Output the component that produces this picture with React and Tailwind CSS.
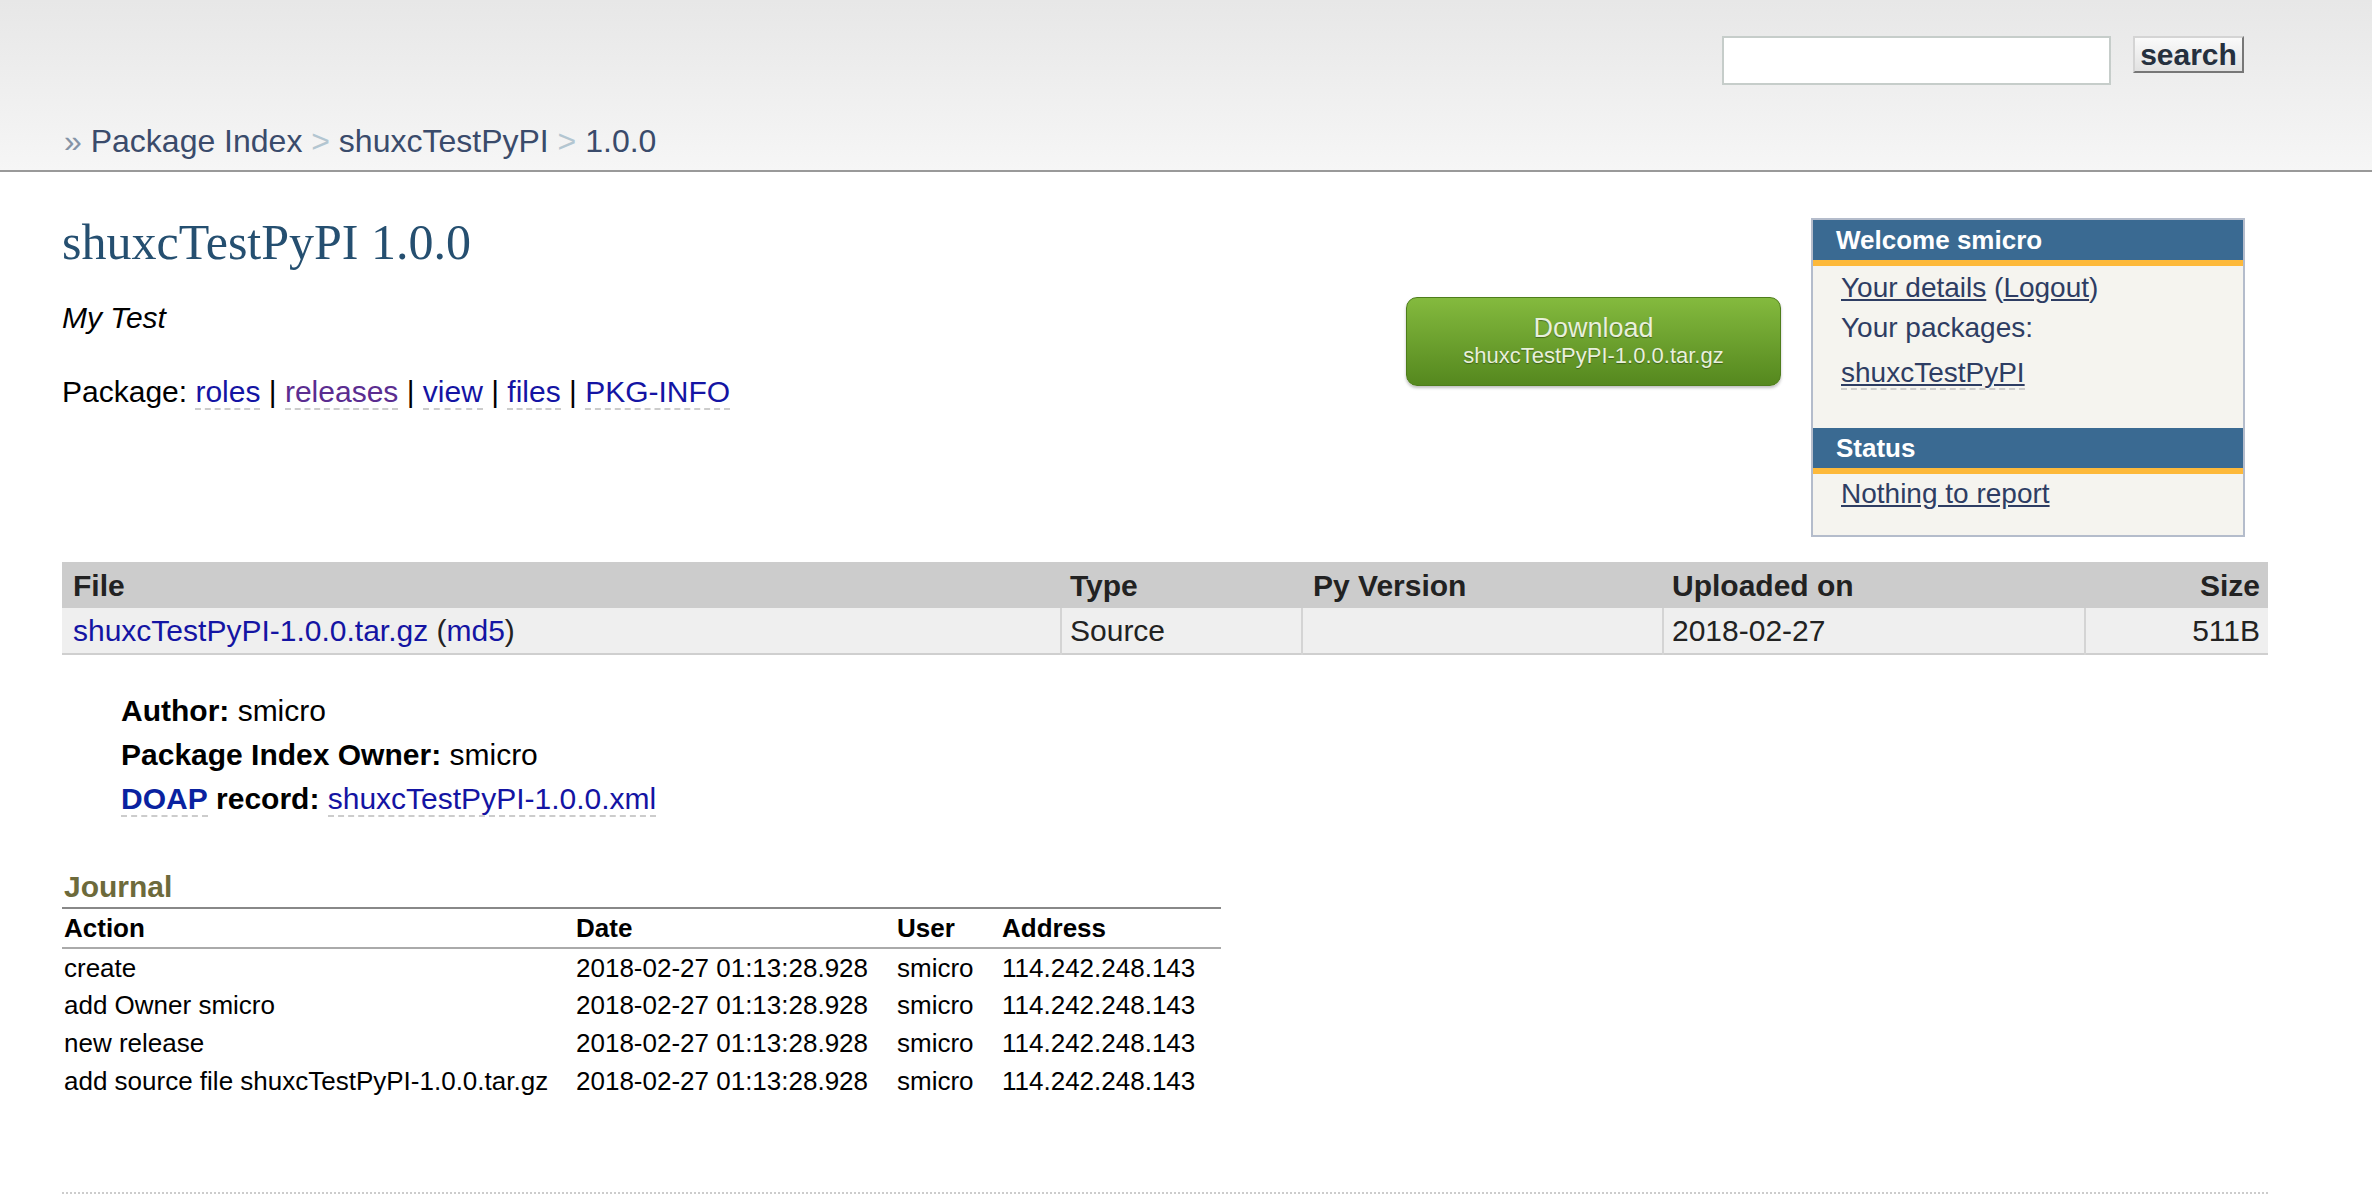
import React from "react";

const journal = [
  ["create"],
  ["add Owner smicro"],
  ["new release"],
  ["add source file shuxcTestPyPI-1.0.0.tar.gz"],
];

function Header() {
  return (
    <header className="h-[172px] border-b-2 border-[#999] bg-gradient-to-b from-[#e7e7e7] to-[#f6f6f6]">
      {/* search */}
      <div className="flex justify-end pt-[36px] pr-[128px]">
        <input
          type="text"
          className="w-[389px] h-[49px] bg-white border-2 border-[#c6cdca] outline-none"
        />
        <button className="ml-[22px] w-[111px] h-[37px] border-2 border-t-[#d4d4d4] border-l-[#d4d4d4] border-r-[#777] border-b-[#777] bg-gradient-to-b from-[#fafafa] to-[#e2e2e2] text-[30px] leading-[30px] font-bold text-[#25303e]">
          search
        </button>
      </div>

      {/* breadcrumb */}
      <nav className="mt-[38px] pl-[64px] text-[32px] leading-[36px] text-[#3a4b6b]">
        <span className="text-[#8593a6]">»</span> Package Index{" "}
        <span className="text-[#b3c6d1]">&gt;</span> shuxcTestPyPI{" "}
        <span className="text-[#b3c6d1]">&gt;</span> 1.0.0
      </nav>
    </header>
  );
}

function PkgLink({ children, visited }) {
  return (
    <a
      href="#"
      className={
        "border-b-2 border-dashed border-[#cccccc] " +
        (visited ? "text-[#5b2d90]" : "text-[#1414a3]")
      }
    >
      {children}
    </a>
  );
}

function DownloadButton() {
  return (
    <a
      href="#"
      className="mt-[83px] flex flex-col items-center w-[375px] h-[89px] pt-[15px] rounded-[11px] border border-[#4e7d1b] bg-gradient-to-b from-[#84ba3e] to-[#55881e] shadow-[0_2px_3px_rgba(0,0,0,0.25)] text-[#e8f0dc] [text-shadow:0_1px_1px_rgba(0,0,0,0.35)]"
    >
      <span className="text-[27px] leading-[30px]">Download</span>
      <span className="text-[22px] leading-[26px]">shuxcTestPyPI-1.0.0.tar.gz</span>
    </a>
  );
}

function Sidebar() {
  return (
    <aside className="mt-[4px] ml-[30px] mr-[23px] w-[434px] h-[319px] border-2 border-[#b4bccb] bg-[#f5f4ef] text-[28px] leading-[40px] text-[#1f1f1f]">
      <div className="h-[40px] bg-[#3a6a92] pl-[23px] text-[26px] font-bold text-white">
        Welcome smicro
      </div>
      <div className="h-[6px] bg-[#fdb93a]" />
      <div className="pl-[28px] pt-[2px]">
        <div>
          <a href="#" className="underline text-[#2e3d63]">Your details</a>{" "}
          <span className="text-[#2e3d63]">
            (<a href="#" className="underline">Logout</a>)
          </span>
        </div>
        <div className="text-[#2e3d63]">Your packages:</div>
        <div className="mt-[5px]">
          <a
            href="#"
            className="underline text-[#2e3d63] border-b-2 border-dashed border-[#cccccc]"
          >
            shuxcTestPyPI
          </a>
        </div>
      </div>
      <div className="mt-[35px] h-[40px] bg-[#3a6a92] pl-[23px] text-[26px] font-bold text-white">
        Status
      </div>
      <div className="h-[6px] bg-[#fdb93a]" />
      <div className="pl-[28px]">
        <a href="#" className="underline text-[#2e3d63]">Nothing to report</a>
      </div>
    </aside>
  );
}

function FilesTable() {
  return (
    <table className="mt-[25px] w-[2206px] border-collapse text-[30px] text-[#222]">
      <thead>
        <tr className="h-[46px] bg-[#cccccc] text-left">
          <th className="w-[999px] pl-[11px] font-bold">File</th>
          <th className="w-[241px] pl-[9px] font-bold">Type</th>
          <th className="w-[361px] pl-[11px] font-bold">Py Version</th>
          <th className="w-[422px] pl-[9px] font-bold">Uploaded on</th>
          <th className="pr-[8px] text-right font-bold">Size</th>
        </tr>
      </thead>
      <tbody>
        <tr className="h-[42px] bg-[#efefef] border-b-2 border-[#cfcfcf]">
          <td className="pl-[11px]">
            <a href="#" className="text-[#1414a3]">shuxcTestPyPI-1.0.0.tar.gz</a> (
            <a href="#" className="text-[#1414a3]">md5</a>)
          </td>
          <td className="pl-[8px] border-l-2 border-[#d4d4d4]">Source</td>
          <td className="pl-[10px] border-l-2 border-[#d4d4d4]"></td>
          <td className="pl-[8px] border-l-2 border-[#d4d4d4]">2018-02-27</td>
          <td className="pr-[8px] text-right border-l-2 border-[#d4d4d4]">511B</td>
        </tr>
      </tbody>
    </table>
  );
}

function Meta() {
  return (
    <div className="mt-[34px] pl-[59px] text-[30px] leading-[44px] text-black">
      <div>
        <b>Author:</b> smicro
      </div>
      <div>
        <b>Package Index Owner:</b> smicro
      </div>
      <div>
        <a href="#" className="font-bold text-[#0a22a0] border-b-2 border-dashed border-[#cccccc]">
          DOAP
        </a>{" "}
        <b>record:</b>{" "}
        <a href="#" className="text-[#1414a3] border-b-2 border-dashed border-[#cccccc]">
          shuxcTestPyPI-1.0.0.xml
        </a>
      </div>
    </div>
  );
}

function Journal() {
  return (
    <section className="mt-[48px] w-[1159px]">
      <h2 className="pl-[2px] text-[30px] leading-[36px] font-bold text-[#6d6a3b] border-b-2 border-[#888] pb-[2px]">
        Journal
      </h2>
      <table className="w-full border-collapse text-[26px] leading-[30px] text-black">
        <thead>
          <tr className="h-[39px] border-b-2 border-[#aaa] text-left">
            <th className="w-[512px] pl-[2px] font-bold">Action</th>
            <th className="w-[321px] pl-[2px] font-bold">Date</th>
            <th className="w-[105px] pl-[2px] font-bold">User</th>
            <th className="pl-[2px] font-bold">Address</th>
          </tr>
        </thead>
        <tbody>
          {journal.map(([action]) => (
            <tr key={action} className="h-[38px]">
              <td className="pl-[2px]">{action}</td>
              <td className="pl-[2px]">2018-02-27 01:13:28.928</td>
              <td className="pl-[2px]">smicro</td>
              <td className="pl-[2px]">114.242.248.143</td>
            </tr>
          ))}
        </tbody>
      </table>
    </section>
  );
}

export default function App() {
  return (
    <div className="w-[2372px] min-h-[1202px] bg-white font-['Liberation_Sans',Arial,sans-serif]">
      <Header />

      <main className="pl-[62px] pr-[104px] pt-[42px]">
        <div className="flex">
          <div className="flex-1">
            <h1 className="font-['Liberation_Serif',Georgia,serif] text-[50px] leading-[56px] text-[#254f70]">
              shuxcTestPyPI 1.0.0
            </h1>
            <p className="mt-[30px] text-[30px] leading-[36px] italic text-black">My Test</p>
            <p className="mt-[38px] text-[30px] leading-[36px] text-black">
              Package: <PkgLink>roles</PkgLink> | <PkgLink visited>releases</PkgLink> |{" "}
              <PkgLink>view</PkgLink> | <PkgLink>files</PkgLink> | <PkgLink>PKG-INFO</PkgLink>
            </p>
          </div>
          <DownloadButton />
          <Sidebar />
        </div>

        <FilesTable />
        <Meta />
        <Journal />

        <div className="mt-[92px] border-t-2 border-dotted border-[#cccccc]" />
      </main>
    </div>
  );
}
